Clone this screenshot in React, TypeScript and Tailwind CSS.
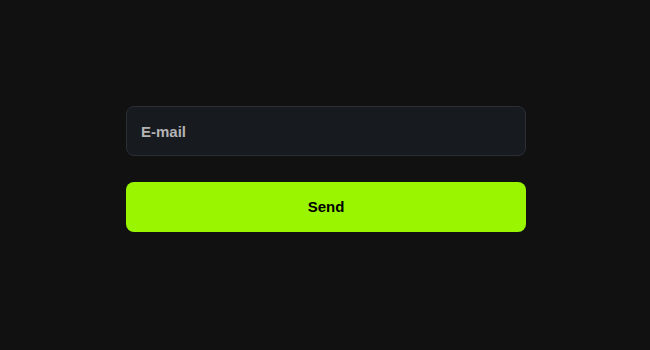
export default function App() {
  return (
    <div className="w-[650px] h-[350px] bg-[#111111] pt-[106px] font-['Liberation_Sans',Arial,sans-serif]">
      <div className="ml-[126px] w-[400px] flex flex-col gap-[26px]">
        <input
          type="email"
          placeholder="E-mail"
          className="h-[50px] w-full rounded-lg border border-[#2a2e37] bg-[#171a1f] px-[14px] text-[15px] font-bold text-white placeholder:text-[#b3b3b3] outline-none font-['Liberation_Sans',Arial,sans-serif]"
        />
        <button className="h-[50px] w-full rounded-lg bg-[#99f600] text-[15px] font-bold text-black font-['Liberation_Sans',Arial,sans-serif]">
          Send
        </button>
      </div>
    </div>
  );
}
